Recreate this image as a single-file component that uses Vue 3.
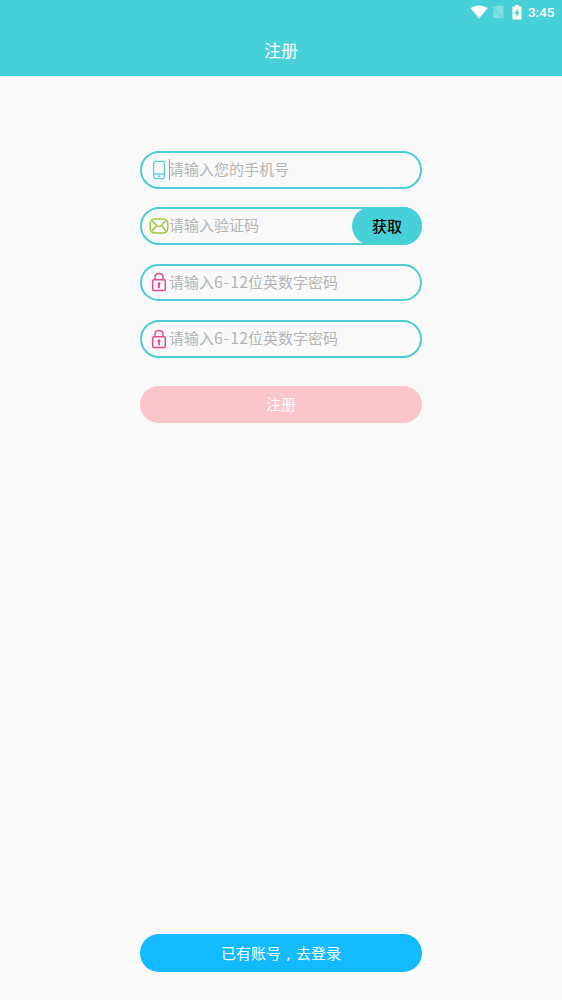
<script setup>
const fields = [
  { icon: 'phone', parts: ['请输入您的手机号'], focused: true },
  { icon: 'mail', parts: ['请输入验证码'], action: '获取' },
  { icon: 'lock', parts: ['请输入', '6', '-', '12', '位英数字密码'] },
  { icon: 'lock', parts: ['请输入', '6', '-', '12', '位英数字密码'] },
]
</script>

<template>
  <div class="screen">
    <header class="header">
      <div class="status">
        <svg class="wifi" width="18" height="14" viewBox="0 0 18 14"><path d="M.5 3.2C5.4-.4 12.600-.4 17.500 3.200L9 13.500Z" fill="#fff" /></svg>
        <svg class="sim" width="13" height="14" viewBox="0 0 13 14">
          <path d="M4.500.8H11.500V11.200L2.700 2.600ZM1.500 4L10.300 13H1.500Z" fill="#fff" opacity=".32" />
          <path d="M.8 1.500L12 13" stroke="#fff" stroke-width="1.100" opacity=".35" />
        </svg>
        <svg class="battery" width="10" height="15" viewBox="0 0 10 15">
          <path d="M3 0H7V1.500H9.500V14.500H.5V1.500H3Z" fill="#fff" />
          <path d="M5.700 3.500L2.300 8.700H4.500V12.300L7.800 7.200H5.700Z" fill="#48d0d8" />
        </svg>
        <span class="clock">3:45</span>
      </div>
      <h1 class="title">注册</h1>
    </header>

    <main class="form">
      <div v-for="(field, i) in fields" :key="i" class="field">
        <span class="icon">
          <svg v-if="field.icon === 'phone'" width="20" height="20" viewBox="0 0 20 20" fill="none" stroke="#55cbe8" stroke-width="1.300">
            <rect x="4.600" y="1.300" width="10.800" height="17.400" rx="1.800" />
            <path d="M4.600 14H15.400" />
            <circle cx="10" cy="16.300" r=".8" fill="#55cbe8" stroke-width=".5" />
          </svg>
          <svg v-else-if="field.icon === 'mail'" width="20" height="20" viewBox="0 0 20 20" fill="none" stroke="#9bc83d" stroke-width="1.400">
            <rect x="1.200" y="3" width="17.600" height="14" rx="4.500" />
            <path d="M2.500 4.300L8.400 10Q10 11.300 11.600 10L17.500 4.300M2.500 15.700L7.600 9.300M17.500 15.700L12.400 9.300" />
          </svg>
          <svg v-else width="20" height="20" viewBox="0 0 20 20" fill="none" stroke="#e54b92" stroke-width="1.500">
            <rect x="3.700" y="7.700" width="12.600" height="10.900" rx="1.300" />
            <path d="M6 7.700V5.200C6 .2 14 .2 14 5.200V7.700" />
            <path d="M10 12.500V16.200" stroke-width="1.800" />
            <circle cx="10" cy="11.800" r="1.500" fill="#e54b92" stroke="none" />
          </svg>
        </span>
        <span class="placeholder"><i v-if="field.focused" class="caret"></i><span v-for="(part, n) in field.parts" :key="n" :class="{ dash: part === '-', digits: /^\d+$/.test(part) }">{{ part }}</span></span>
        <button v-if="field.action" class="fetch">{{ field.action }}</button>
      </div>
      <button class="submit">注册</button>
    </main>

    <footer class="footer">
      <button class="login">已有账号<span class="comma">,</span>去登录</button>
    </footer>
  </div>
</template>

<style>
body { background: #f9f9f9; }
</style>

<style scoped>
.screen {
  box-sizing: border-box;
  height: 1000px;
  display: flex;
  flex-direction: column;
  align-items: center;
  background: #f9f9f9;
  font-family: "Noto Sans", "Noto Sans CJK SC", sans-serif;
}
.header {
  width: 100%;
  height: 76px;
  background: #48d0d8;
  color: #fff;
}
.status {
  height: 24px;
  display: flex;
  align-items: center;
  justify-content: flex-end;
  padding-right: 7.500px;
  box-sizing: border-box;
}
.wifi { margin-right: -1px; }
.sim { margin-left: 5px; }
.battery { margin: 0 6px 0 7px; }
.clock {
  font: 500 13.500px/24px Roboto, sans-serif;
}
.title {
  margin: 0;
  font-size: 17px;
  line-height: 54px;
  font-weight: 400;
  text-align: center;
}
.form {
  width: 282px;
  padding-top: 75px;
  display: flex;
  flex-direction: column;
}
.field {
  box-sizing: border-box;
  height: 37.800px;
  margin-bottom: 18.500px;
  border: 2px solid #4ccdd3;
  border-radius: 19px;
  display: flex;
  align-items: center;
  padding-left: 7px;
}
.icon { width: 20px; height: 20px; }
.icon svg { display: block; }
.placeholder {
  position: relative;
  flex: 1;
  height: 34px;
  color: #b4b4b4;
  font-size: 15px;
  line-height: 33px;
  white-space: nowrap;
}
.digits, .dash {
  font-family: "Noto Sans CJK SC", sans-serif;
  font-size: 16px;
  line-height: 1;
}
.dash { padding: 0 .9px; }
.caret {
  position: absolute;
  left: 0;
  top: 6px;
  width: 1px;
  height: 21px;
  background: #999;
}
button {
  border: 0;
  padding: 0 0 2px;
  font: inherit;
  font-size: 15px;
}
.fetch {
  width: 70px;
  height: 37.800px;
  margin: -2px;
  border-radius: 19px;
  background: #48d0d8;
  color: #000;
  font-weight: 500;
}
.submit {
  height: 37px;
  margin-top: 9.800px;
  border-radius: 19px;
  background: #fac5cb;
  color: #fff;
}
.footer { margin-top: auto; padding-bottom: 28px; }
.login {
  display: block;
  width: 282px;
  height: 38px;
  border-radius: 19px;
  background: #13baff;
  color: #fff;
}
.comma {
  display: inline-block;
  width: 15px;
  text-align: center;
}
</style>
